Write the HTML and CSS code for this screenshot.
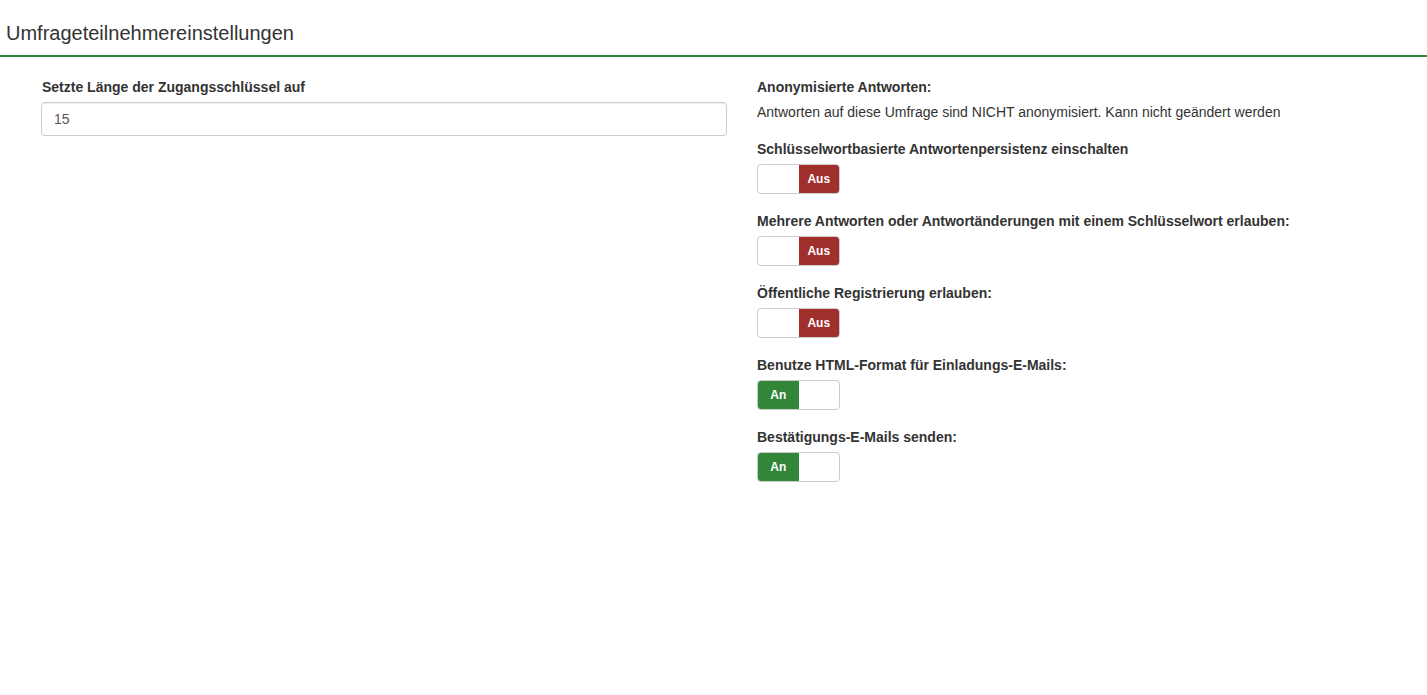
FILE: index.html
```html
<!DOCTYPE html>
<html lang="de">
<head>
<meta charset="utf-8">
<title>Umfrageteilnehmereinstellungen</title>
<link rel="stylesheet" href="styles.css">
</head>
<body>
<div class="page">
  <h3 class="title">Umfrageteilnehmereinstellungen</h3>
  <div class="row">
    <div class="col col-left">
      <div class="group">
        <label class="lbl">Setzte Länge der Zugangsschlüssel auf</label>
        <input class="input" type="text" value="15">
      </div>
    </div>
    <div class="col col-right">
      <div class="group">
        <label class="lbl">Anonymisierte Antworten:</label>
        <p class="text">Antworten auf diese Umfrage sind NICHT anonymisiert. Kann nicht geändert werden</p>
      </div>
      <div class="group">
        <label class="lbl">Schlüsselwortbasierte Antwortenpersistenz einschalten</label>
        <div class="toggle"><span class="half"></span><span class="half off">Aus</span></div>
      </div>
      <div class="group">
        <label class="lbl">Mehrere Antworten oder Antwortänderungen mit einem Schlüsselwort erlauben:</label>
        <div class="toggle"><span class="half"></span><span class="half off">Aus</span></div>
      </div>
      <div class="group">
        <label class="lbl">Öffentliche Registrierung erlauben:</label>
        <div class="toggle"><span class="half"></span><span class="half off">Aus</span></div>
      </div>
      <div class="group">
        <label class="lbl">Benutze HTML-Format für Einladungs-E-Mails:</label>
        <div class="toggle"><span class="half on">An</span><span class="half"></span></div>
      </div>
      <div class="group">
        <label class="lbl">Bestätigungs-E-Mails senden:</label>
        <div class="toggle"><span class="half on">An</span><span class="half"></span></div>
      </div>
    </div>
  </div>
</div>
</body>
</html>
```
FILE: styles.css
```css
html, body {
  margin: 0;
  padding: 0;
  background: #fff;
}
body {
  font-family: "Liberation Sans", Arial, sans-serif;
  font-size: 14px;
  line-height: 20px;
  color: #333;
  overflow: hidden;
}
.page {
  width: 1427px;
}
.title {
  margin: 0;
  padding: 20px 0 9px 6px;
  font-size: 20px;
  font-weight: normal;
  line-height: 26px;
  color: #333;
  border-bottom: 2px solid #328637;
}
.row {
  display: grid;
  grid-template-columns: 686px 1fr;
  column-gap: 30px;
  padding: 20px 0 0 41px;
}
.group {
  margin-bottom: 17px;
}
.lbl {
  display: block;
  font-weight: bold;
  margin: 0 0 5px 0;
}
.col-left .lbl {
  margin-left: 1px;
}
.input {
  display: block;
  box-sizing: border-box;
  width: 686px;
  height: 34px;
  padding: 6px 12px;
  font: inherit;
  color: #555;
  border: 1px solid #ccc;
  border-radius: 4px;
  box-shadow: inset 0 1px 1px rgba(0,0,0,0.075);
  outline: none;
}
.text {
  margin: 0;
}
.toggle {
  display: flex;
  box-sizing: border-box;
  width: 83px;
  height: 30px;
  border: 1px solid #ccc;
  border-radius: 4px;
  overflow: hidden;
}
.half {
  flex: 1;
  display: flex;
  align-items: center;
  justify-content: center;
  font-size: 12px;
  font-weight: bold;
  color: #fff;
}
.off {
  background: #a1302d;
}
.on {
  background: #328637;
}
```
